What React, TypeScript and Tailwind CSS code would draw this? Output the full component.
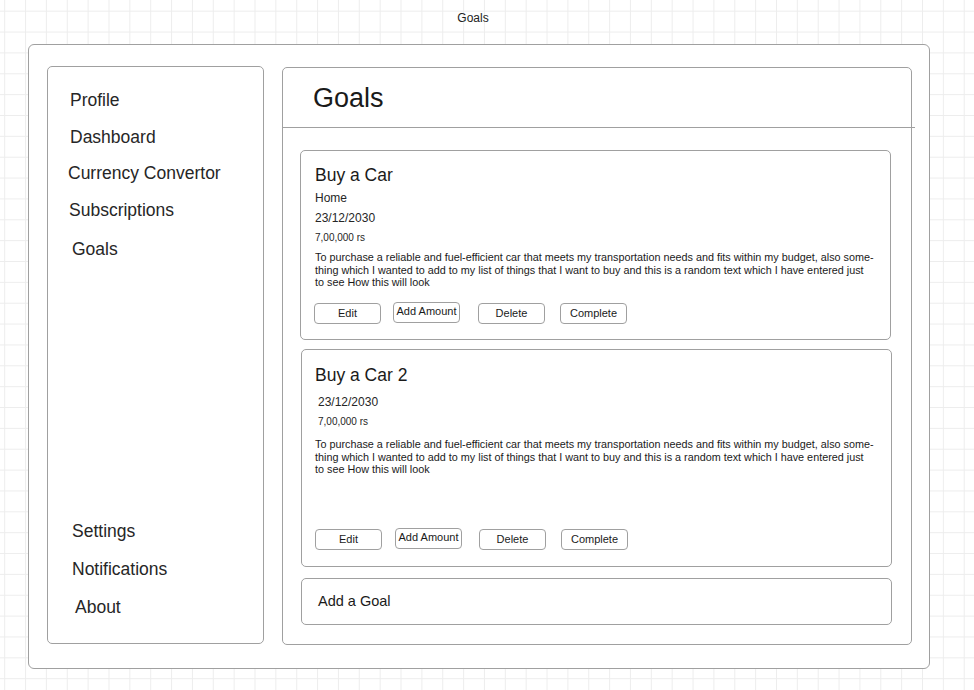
import React from 'react';

const topNav = [
  { label: 'Profile', cls: 'ml-[22px] h-[37px]' },
  { label: 'Dashboard', cls: 'ml-[22px] h-[36px]' },
  { label: 'Currency Convertor', cls: 'ml-[20px] h-[37px]' },
  { label: 'Subscriptions', cls: 'ml-[21px] h-[39px]' },
  { label: 'Goals', cls: 'ml-[24px] h-[20px]' },
];

const bottomNav = [
  { label: 'Settings', cls: 'ml-[24px] h-[38px]' },
  { label: 'Notifications', cls: 'ml-[24px] h-[38px]' },
  { label: 'About', cls: 'ml-[27px] h-[20px]' },
];

const desc = [
  'To purchase a reliable and fuel-efficient car that meets my transportation needs and fits within my budget, also some-',
  'thing which I wanted to add to my list of things that I want to buy and this is a random text which I have entered just',
  'to see How this will look',
];

function Btn({ label, cls }: { label: string; cls: string }) {
  return (
    <button className={`h-[21px] w-[67px] rounded-[4px] border border-[#a0a0a0] bg-white text-[11px] leading-none text-[#1a1a1a] ${cls}`}>
      {label}
    </button>
  );
}

function Description() {
  return (
    <div className="text-[10.8px] leading-[12.5px] text-[#1a1a1a] whitespace-nowrap">
      {desc.map((line) => (
        <div key={line}>{line}</div>
      ))}
    </div>
  );
}

export default function App() {
  return (
    <div className="w-[974px] h-[690px] overflow-hidden bg-white bg-[linear-gradient(to_right,#ededed_1px,transparent_1px),linear-gradient(to_bottom,#ededed_1px,transparent_1px)] bg-[size:20.87px_20.87px] bg-[position:4.2px_10.7px] font-['Liberation_Sans',Arial,sans-serif] text-[#262626]">
      {/* page caption */}
      <div className="h-[44px] pt-[11px] pr-[28px] text-center text-[12px] leading-[14px] text-[#222]">Goals</div>

      {/* outer frame */}
      <div className="ml-[28px] w-[902px] h-[625px] rounded-[6px] border border-[#a0a0a0] bg-white flex items-start gap-[18px] pl-[18px] pt-[21px]">
        {/* sidebar */}
        <div className="w-[217px] h-[578px] rounded-[5px] border border-[#a0a0a0] flex flex-col justify-between pt-[23px] pb-[26px] text-[17.5px] leading-[20px]">
          <div className="flex flex-col">
            {topNav.map((n) => (
              <div key={n.label} className={n.cls}>{n.label}</div>
            ))}
          </div>
          <div className="flex flex-col">
            {bottomNav.map((n) => (
              <div key={n.label} className={n.cls}>{n.label}</div>
            ))}
          </div>
        </div>

        {/* main panel */}
        <div className="mt-[1px] w-[630px] h-[578px] rounded-[5px] border border-[#a0a0a0] flex flex-col">
          <div className="h-[60px] -mr-[4px] border-b border-[#a0a0a0] pl-[30px] pt-[14px] text-[27px] leading-[32px] text-[#1a1a1a]">
            Goals
          </div>

          {/* card 1 */}
          <div className="ml-[17px] mt-[22px] w-[591px] h-[190px] rounded-[5px] border border-[#a0a0a0] pl-[14px] pt-[14px]">
            <div className="text-[17.5px] leading-[20px] text-[#1a1a1a]">Buy a Car</div>
            <div className="mt-[6px] text-[12px] leading-[14px]">Home</div>
            <div className="mt-[6px] text-[12px] leading-[14px]">23/12/2030</div>
            <div className="mt-[7px] text-[10px] leading-[12px]">7,00,000 rs</div>
            <div className="mt-[7px]">
              <Description />
            </div>
            <div className="mt-[14px] -ml-[1px] flex items-start">
              <Btn label="Edit" cls="" />
              <Btn label="Add Amount" cls="ml-[12px] -mt-[1px] pb-[2px]" />
              <Btn label="Delete" cls="ml-[18px]" />
              <Btn label="Complete" cls="ml-[15px]" />
            </div>
          </div>

          {/* card 2 */}
          <div className="ml-[18px] mt-[9px] w-[591px] h-[218px] rounded-[5px] border border-[#a0a0a0] pl-[13px] pt-[15px] flex flex-col">
            <div className="text-[17.5px] leading-[20px] text-[#1a1a1a]">Buy a Car 2</div>
            <div className="ml-[3px] mt-[10px] text-[12px] leading-[14px]">23/12/2030</div>
            <div className="ml-[3px] mt-[7px] text-[10px] leading-[12px]">7,00,000 rs</div>
            <div className="mt-[10px]">
              <Description />
            </div>
            <div className="mt-auto mb-[16px] flex items-start">
              <Btn label="Edit" cls="" />
              <Btn label="Add Amount" cls="ml-[13px] -mt-[1px] pb-[2px]" />
              <Btn label="Delete" cls="ml-[17px]" />
              <Btn label="Complete" cls="ml-[15px]" />
            </div>
          </div>

          {/* add a goal */}
          <div className="ml-[18px] mt-[11px] w-[591px] h-[47px] rounded-[5px] border border-[#a0a0a0] pl-[16px] flex items-center text-[14.5px] text-[#1a1a1a]">
            Add a Goal
          </div>
        </div>
      </div>
    </div>
  );
}
